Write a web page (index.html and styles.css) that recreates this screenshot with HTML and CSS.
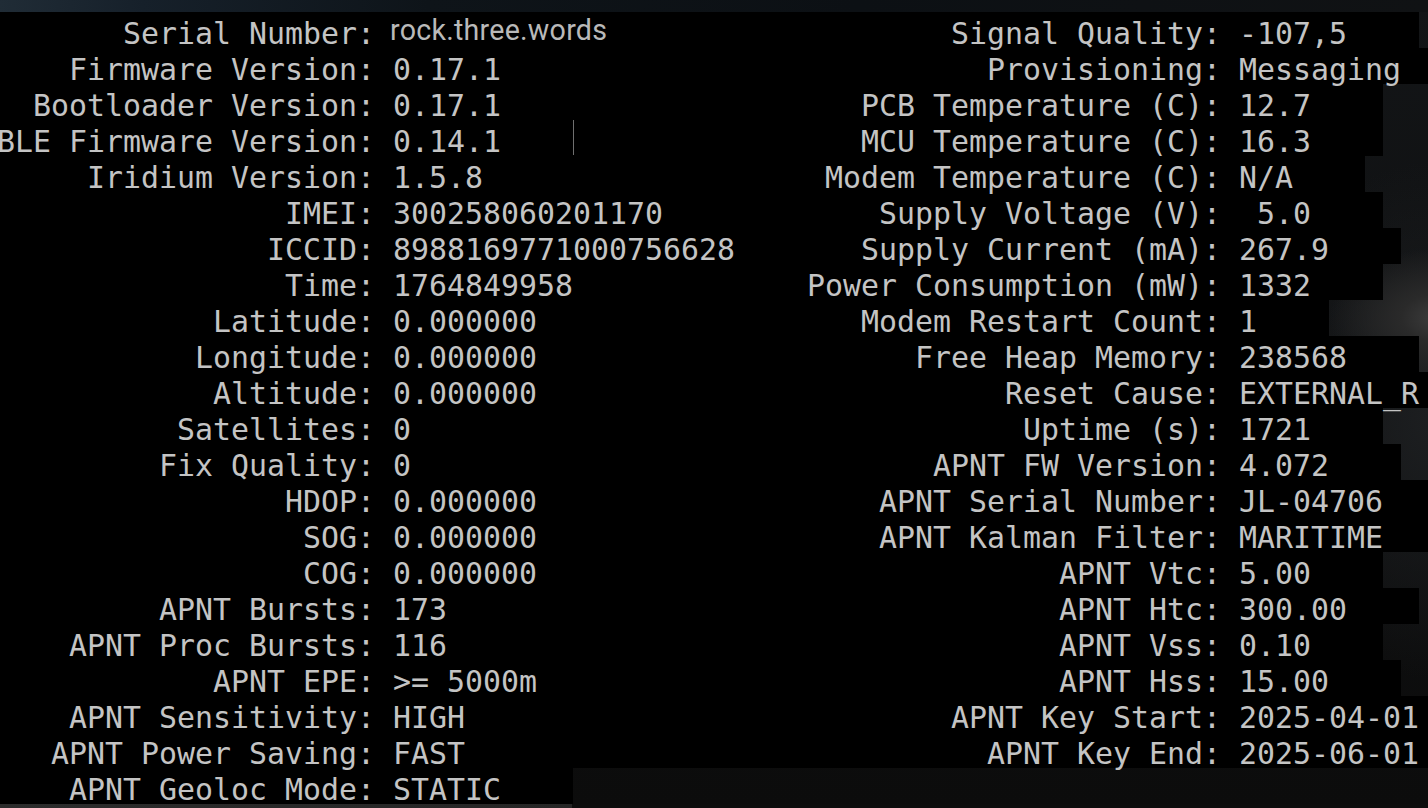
FILE: index.html
```html
<!DOCTYPE html>
<html lang="en">
<head>
<meta charset="utf-8">
<title>Device status</title>
<link rel="stylesheet" href="styles.css">
</head>
<body>
<div class="screen">
  <div class="topbar"></div>
  <div class="term">
    <div class="row"><span class="lkey">Serial Number:</span><span class="lval"><span class="serial">rock.three.words</span></span><span class="rkey">Signal Quality:</span><span class="rval">-107,5</span></div>
    <div class="row"><span class="lkey">Firmware Version:</span><span class="lval">0.17.1</span><span class="rkey">Provisioning:</span><span class="rval">Messaging</span></div>
    <div class="row"><span class="lkey">Bootloader Version:</span><span class="lval">0.17.1</span><span class="rkey">PCB Temperature (C):</span><span class="rval">12.7</span></div>
    <div class="row"><span class="lkey">BLE Firmware Version:</span><span class="lval">0.14.1</span><span class="rkey">MCU Temperature (C):</span><span class="rval">16.3</span></div>
    <div class="row"><span class="lkey">Iridium Version:</span><span class="lval">1.5.8</span><span class="rkey">Modem Temperature (C):</span><span class="rval">N/A</span></div>
    <div class="row"><span class="lkey">IMEI:</span><span class="lval">300258060201170</span><span class="rkey">Supply Voltage (V):</span><span class="rval"> 5.0</span></div>
    <div class="row"><span class="lkey">ICCID:</span><span class="lval">8988169771000756628</span><span class="rkey">Supply Current (mA):</span><span class="rval">267.9</span></div>
    <div class="row"><span class="lkey">Time:</span><span class="lval">1764849958</span><span class="rkey">Power Consumption (mW):</span><span class="rval">1332</span></div>
    <div class="row"><span class="lkey">Latitude:</span><span class="lval">0.000000</span><span class="rkey">Modem Restart Count:</span><span class="rval">1</span></div>
    <div class="row"><span class="lkey">Longitude:</span><span class="lval">0.000000</span><span class="rkey">Free Heap Memory:</span><span class="rval">238568</span></div>
    <div class="row"><span class="lkey">Altitude:</span><span class="lval">0.000000</span><span class="rkey">Reset Cause:</span><span class="rval">EXTERNAL_R</span></div>
    <div class="row"><span class="lkey">Satellites:</span><span class="lval">0</span><span class="rkey">Uptime (s):</span><span class="rval">1721</span></div>
    <div class="row"><span class="lkey">Fix Quality:</span><span class="lval">0</span><span class="rkey">APNT FW Version:</span><span class="rval">4.072</span></div>
    <div class="row"><span class="lkey">HDOP:</span><span class="lval">0.000000</span><span class="rkey">APNT Serial Number:</span><span class="rval">JL-04706</span></div>
    <div class="row"><span class="lkey">SOG:</span><span class="lval">0.000000</span><span class="rkey">APNT Kalman Filter:</span><span class="rval">MARITIME</span></div>
    <div class="row"><span class="lkey">COG:</span><span class="lval">0.000000</span><span class="rkey">APNT Vtc:</span><span class="rval">5.00</span></div>
    <div class="row"><span class="lkey">APNT Bursts:</span><span class="lval">173</span><span class="rkey">APNT Htc:</span><span class="rval">300.00</span></div>
    <div class="row"><span class="lkey">APNT Proc Bursts:</span><span class="lval">116</span><span class="rkey">APNT Vss:</span><span class="rval">0.10</span></div>
    <div class="row"><span class="lkey">APNT EPE:</span><span class="lval">&gt;= 5000m</span><span class="rkey">APNT Hss:</span><span class="rval">15.00</span></div>
    <div class="row"><span class="lkey">APNT Sensitivity:</span><span class="lval">HIGH</span><span class="rkey">APNT Key Start:</span><span class="rval">2025-04-01</span></div>
    <div class="row"><span class="lkey">APNT Power Saving:</span><span class="lval">FAST</span><span class="rkey">APNT Key End:</span><span class="rval">2025-06-01</span></div>
    <div class="row solo"><span class="lkey">APNT Geoloc Mode:</span><span class="lval">STATIC</span></div>
    <span class="caret"></span>
  </div>
  <div class="bottomstrip"></div>
</div>
</body>
</html>
```

FILE: styles.css
```css
* { box-sizing: border-box; }
html, body {
  margin: 0;
  padding: 0;
  width: 1428px;
  height: 808px;
  overflow: hidden;
}
body {
  background:
    radial-gradient(ellipse 110px 70px at 1440px 318px, #3e3e3e 0%, #2a2a2a 35%, rgba(20,20,20,0) 100%),
    radial-gradient(ellipse 200px 260px at 1440px 420px, #1d1f21 0%, rgba(14,15,16,0) 100%),
    linear-gradient(180deg, #131517 0%, #0e0f10 60%, #0c0c0c 100%);
}
.screen {
  display: flex;
  flex-direction: column;
  height: 808px;
}
.topbar {
  height: 12px;
  flex: none;
  background: linear-gradient(90deg, #202c36 0%, #16202a 10%, #0e1419 30%, #0c1014 60%, #101214 100%);
}
.term {
  position: relative;
  display: block;
  height: 792px;
  flex: none;
  font-family: "DejaVu Sans Mono", "Liberation Mono", monospace;
  font-size: 29.9px;
  color: #c4c4c4;
}
.row {
  display: flex;
  width: max-content;
  height: 36px;
  line-height: 36px;
  padding-top: 4px;
  padding-right: 72px;
  background: #000;
  white-space: pre;
}
.lkey {
  flex: none;
  width: 375px;
  display: flex;
  justify-content: flex-end;
}
.lval {
  flex: none;
  width: 307px;
  margin-left: 18px;
}
.solo .lval { width: auto; }
.rkey {
  flex: none;
  width: 521px;
  display: flex;
  justify-content: flex-end;
}
.rval {
  flex: none;
  margin-left: 18px;
}
.serial {
  font-family: Roboto, "Liberation Sans", sans-serif;
  font-size: 28.6px;
  letter-spacing: 0.25px;
  color: #b9b9b9;
  position: relative;
  top: -4px;
  margin-left: -3px;
}
.caret {
  position: absolute;
  left: 573px;
  top: 108px;
  width: 1px;
  height: 35px;
  background: #6f6f6f;
}
.bottomstrip {
  height: 4px;
  flex: none;
  background: linear-gradient(90deg, #2c2c2c 0, #262626 572px, #0d0d0d 572px);
}
```
